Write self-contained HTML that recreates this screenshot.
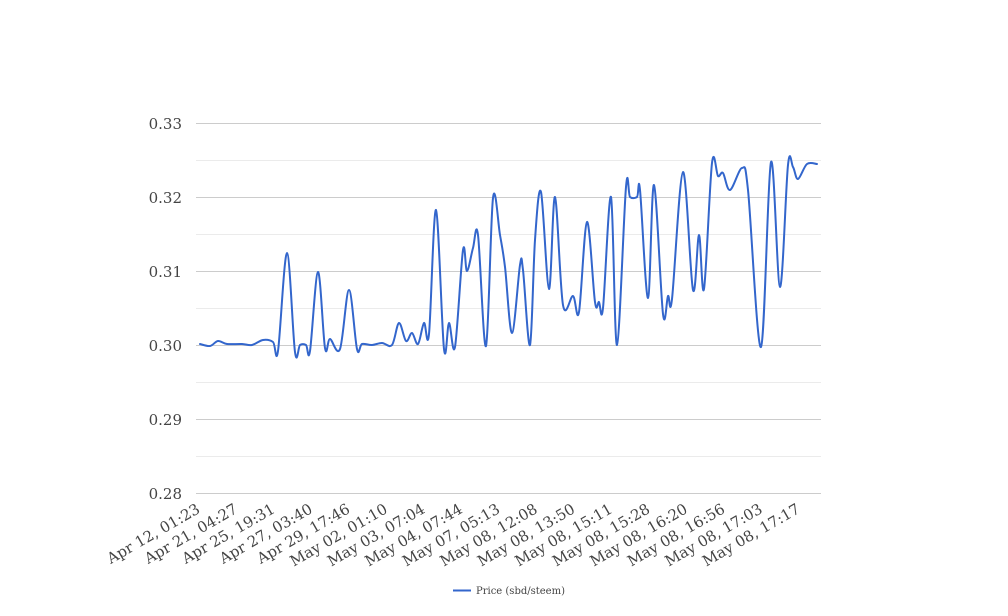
<!DOCTYPE html>
<html><head><meta charset="utf-8"><style>
html,body{margin:0;padding:0;background:#fff;width:1008px;height:616px;overflow:hidden}
svg{display:block}
text{font-family:"DejaVu Serif","Liberation Serif",serif;fill:#444}
</style></head><body>
<svg width="1008" height="616" viewBox="0 0 1008 616">
<g stroke="#ebebeb" stroke-width="1">
<line x1="196" x2="821" y1="160.5" y2="160.5"/><line x1="196" x2="821" y1="234.5" y2="234.5"/>
<line x1="196" x2="821" y1="308.5" y2="308.5"/><line x1="196" x2="821" y1="382.5" y2="382.5"/>
<line x1="196" x2="821" y1="456.5" y2="456.5"/>
</g>
<g stroke="#cccccc" stroke-width="1">
<line x1="196" x2="821" y1="123.5" y2="123.5"/><line x1="196" x2="821" y1="197.5" y2="197.5"/>
<line x1="196" x2="821" y1="271.5" y2="271.5"/><line x1="196" x2="821" y1="345.5" y2="345.5"/>
<line x1="196" x2="821" y1="419.5" y2="419.5"/><line x1="196" x2="821" y1="493.5" y2="493.5"/>
</g>
<g font-size="15" text-anchor="end">
<text x="182" y="129">0.33</text><text x="182" y="203">0.32</text><text x="182" y="277">0.31</text>
<text x="182" y="351">0.30</text><text x="182" y="425">0.29</text><text x="182" y="499">0.28</text>
</g>
<path id="ln" fill="none" stroke="#3366cc" stroke-width="2" stroke-linejoin="round" stroke-linecap="round" d="M200,344 L210,346 L218,341 L227,344 L242,344 L252,345 L263,340 L273,342 L278,351 L287,253 L295,352 L300,345 L306,345 L310,351 L318,272 L325,348 L330,339 L340,349 L349,290 L357,349 L362,344 L372,345 L382,343 L392,345 L399,323 L406,341 L412,333 L418,344 L424,323 L429,334 L436,210 L444,349 L449,323 L455,347 L463,250 L467,271 L473,248 L478,235 L486,346 L493,198 L500,235 L505,267 L512,333 L520,265 L523,270 L530,345 L535,240 L541,192 L549,289 L555,197 L563,305 L573,296 L579,312 L587,222 L595,302 L599,302 L603,308 L611,197 L617,345 L626,187 L630,197 L637,197 L640,190 L648,298 L654,185 L663,314 L668,296 L672,299 L683,172 L693,290 L699,235 L704,289 L712,163 L718,176 L723,173 L730,190 L742,168 L748,190 L761,347 L771,162 L780,287 L788,165 L793,167 L798,179 L807,164 L817,164"/>
<g font-size="15" text-anchor="end">
<text transform="translate(201,512) rotate(-30)">Apr 12, 01:23</text>
<text transform="translate(238.5,512) rotate(-30)">Apr 21, 04:27</text>
<text transform="translate(276,512) rotate(-30)">Apr 25, 19:31</text>
<text transform="translate(313.5,512) rotate(-30)">Apr 27, 03:40</text>
<text transform="translate(351,512) rotate(-30)">Apr 29, 17:46</text>
<text transform="translate(388.5,512) rotate(-30)">May 02, 01:10</text>
<text transform="translate(426,512) rotate(-30)">May 03, 07:04</text>
<text transform="translate(463.5,512) rotate(-30)">May 04, 07:44</text>
<text transform="translate(501,512) rotate(-30)">May 07, 05:13</text>
<text transform="translate(538.5,512) rotate(-30)">May 08, 12:08</text>
<text transform="translate(576,512) rotate(-30)">May 08, 13:50</text>
<text transform="translate(613.5,512) rotate(-30)">May 08, 15:11</text>
<text transform="translate(651,512) rotate(-30)">May 08, 15:28</text>
<text transform="translate(688.5,512) rotate(-30)">May 08, 16:20</text>
<text transform="translate(726,512) rotate(-30)">May 08, 16:56</text>
<text transform="translate(763.5,512) rotate(-30)">May 08, 17:03</text>
<text transform="translate(801,512) rotate(-30)">May 08, 17:17</text>
</g>
<line x1="453" x2="471" y1="590.5" y2="590.5" stroke="#3366cc" stroke-width="2"/>
<text x="476" y="594" font-size="10">Price (sbd/steem)</text>
</svg>
<script>
(function(){
var p=document.getElementById('ln');
var pts=p.getAttribute('d').replace(/[ML]/g,' ').trim().split(/\s+/).map(function(s){var a=s.split(',');return [+a[0],+a[1]];});
var d='M'+pts[0][0]+','+pts[0][1];
for(var i=0;i<pts.length-1;i++){
var p0=pts[i-1]||pts[i],p1=pts[i],p2=pts[i+1],p3=pts[i+2]||p2;
var t=0.5/3;
var c1=[p1[0]+(p2[0]-p0[0])*t,p1[1]+(p2[1]-p0[1])*t];
var c2=[p2[0]-(p3[0]-p1[0])*t,p2[1]-(p3[1]-p1[1])*t];
c1[0]=Math.min(Math.max(c1[0],p1[0]),p2[0]);c2[0]=Math.min(Math.max(c2[0],p1[0]),p2[0]);
d+=' C'+c1[0].toFixed(1)+','+c1[1].toFixed(1)+' '+c2[0].toFixed(1)+','+c2[1].toFixed(1)+' '+p2[0]+','+p2[1];
}
p.setAttribute('d',d);
})();
</script>
</body></html>
